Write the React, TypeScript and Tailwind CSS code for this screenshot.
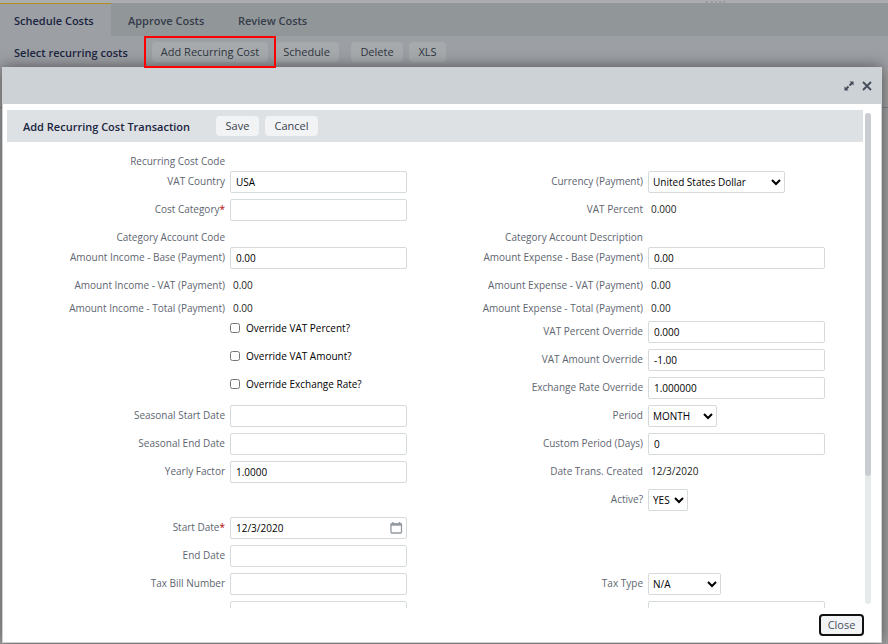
import { useId } from "react";

type FieldProps = {
    label: string;
    value?: string;
    kind?: "input" | "text" | "select" | "date";
    required?: boolean;
    width?: string;
};

type Row = {
    height: string;
    left?: FieldProps;
    right?: FieldProps;
    check?: string;
};

const FULL = "h-7 items-center [&>label]:pb-0.5 [&>span]:pb-0.5";

const rows: Row[] = [
    { height: "h-[26px] items-end", left: { label: "Recurring Cost Code", kind: "text" } },
    {
        height: FULL,
        left: { label: "VAT Country", value: "USA" },
        right: { label: "Currency (Payment)", value: "United States Dollar", kind: "select", width: "w-[137px]" },
    },
    {
        height: FULL,
        left: { label: "Cost Category", required: true },
        right: { label: "VAT Percent", value: "0.000", kind: "text" },
    },
    {
        height: "h-5 items-end",
        left: { label: "Category Account Code", kind: "text" },
        right: { label: "Category Account Description", kind: "text" },
    },
    {
        height: FULL,
        left: { label: "Amount Income - Base (Payment)", value: "0.00" },
        right: { label: "Amount Expense - Base (Payment)", value: "0.00" },
    },
    {
        height: FULL,
        left: { label: "Amount Income - VAT (Payment)", value: "0.00", kind: "text" },
        right: { label: "Amount Expense - VAT (Payment)", value: "0.00", kind: "text" },
    },
    {
        height: "h-[18px] items-center [&>span]:pb-0.5",
        left: { label: "Amount Income - Total (Payment)", value: "0.00", kind: "text" },
        right: { label: "Amount Expense - Total (Payment)", value: "0.00", kind: "text" },
    },
    { height: FULL, check: "Override VAT Percent?", right: { label: "VAT Percent Override", value: "0.000" } },
    { height: FULL, check: "Override VAT Amount?", right: { label: "VAT Amount Override", value: "-1.00" } },
    { height: FULL, check: "Override Exchange Rate?", right: { label: "Exchange Rate Override", value: "1.000000" } },
    {
        height: FULL,
        left: { label: "Seasonal Start Date" },
        right: { label: "Period", value: "MONTH", kind: "select", width: "w-[69px]" },
    },
    { height: FULL, left: { label: "Seasonal End Date" }, right: { label: "Custom Period (Days)", value: "0" } },
    {
        height: FULL,
        left: { label: "Yearly Factor", value: "1.0000" },
        right: { label: "Date Trans. Created", value: "12/3/2020", kind: "text" },
    },
    { height: FULL, right: { label: "Active?", value: "YES", kind: "select", width: "w-10" } },
    { height: FULL, left: { label: "Start Date", value: "12/3/2020", kind: "date", required: true } },
    { height: FULL, left: { label: "End Date" } },
    {
        height: FULL,
        left: { label: "Tax Bill Number" },
        right: { label: "Tax Type", value: "N/A", kind: "select", width: "w-[73px]" },
    },
    { height: FULL, left: { label: "" }, right: { label: "" } },
];

const inputClass = "block h-[22px] w-[177px] rounded-xs border border-[#d5dadc] bg-white px-[5px] text-black";

function CalendarIcon() {
    return (
        <svg width="14" height="14" viewBox="0 0 14 14" fill="none" stroke="#9299a0" aria-hidden="true">
            <rect x="2" y="3" width="10.500" height="9" rx="1" strokeWidth="1.300" />
            <path d="M1.500 3.500H13" strokeWidth="2.400" />
            <path d="M4 1v2M10.500 1v2" strokeWidth="1.500" />
        </svg>
    );
}

function Field({ label, value = "", kind = "input", required, width }: FieldProps) {
    const id = useId();
    const caption = (
        <>
            {label}
            {required && <span className="text-[#b00000]">*</span>}
        </>
    );

    if (kind === "text") {
        return (
            <>
                <span className="pr-[5px] text-right text-[#5e6570]">{caption}</span>
                <span className="pl-[3px] text-[#222]">{value}</span>
            </>
        );
    }

    return (
        <>
            <label htmlFor={id} className="pr-[5px] text-right text-[#5e6570]">{caption}</label>
            {kind === "select" ? (
                <select id={id} className={`h-[22px] rounded-xs border border-[#d5dadc] bg-white text-black ${width}`}>
                    <option>{value}</option>
                </select>
            ) : (
                <div className="relative w-[177px]">
                    <input id={id} type="text" defaultValue={value} className={inputClass} />
                    {kind === "date" && (
                        <button type="button" aria-label="Pick a date" className="absolute top-1 right-1">
                            <CalendarIcon />
                        </button>
                    )}
                </div>
            )}
        </>
    );
}

function CheckField({ label }: { label: string }) {
    return (
        <>
            <span />
            <label className="flex items-center gap-1.5 self-start pt-[3px] text-black">
                <input type="checkbox" className="size-2.5" />
                {label}
            </label>
        </>
    );
}

function Blank() {
    return (
        <>
            <span />
            <span />
        </>
    );
}

const backButton = "relative h-5 whitespace-nowrap rounded-sm bg-[#a6aaad] pt-px text-[11px] text-[#2f3540]";
const barButton = "h-5 rounded-sm bg-[#f1f3f5] text-[11px] text-[#3a414c]";

export default function App() {
    return (
        <div className="relative flex h-screen flex-col overflow-hidden bg-[#a2a2a2] font-['Open_Sans','Noto_Sans',sans-serif]">
            {/* Page under the dialog */}
            <div className="flex h-[3px] shrink-0 justify-end bg-[#acadaf]">
                <div className="mr-[163px] w-[19px] border-b-2 border-dotted border-[#999ca0]"></div>
            </div>
            <nav className="flex h-[33px] shrink-0 bg-[#919699] text-[11px] font-semibold text-[#353c49]">
                <a href="#schedule" className="flex w-[111px] items-center border-t border-[#b08d1c] bg-[#9c9fa4] pt-0.5 pl-3.5 text-[#1b2440]">Schedule Costs</a>
                <a href="#approve" className="flex w-[110px] items-center pt-[3px] pl-[17px]">Approve Costs</a>
                <a href="#review" className="flex items-center pt-[3px] pl-[17px]">Review Costs</a>
            </nav>
            <div className="flex h-8 shrink-0 items-center bg-[#9c9fa4] pl-3.5">
                <h1 className="w-[138px] pt-0.5 text-[11px] font-semibold text-[#1b2440]">Select recurring costs</h1>
                <button type="button" className={`${backButton} w-[116px]`}>
                    Add Recurring Cost
                    <span className="absolute -inset-x-2 -inset-y-1.5 z-20 border-2 border-[#ff0000]"></span>
                </button>
                <button type="button" className={`${backButton} ml-1.5 w-[65px]`}>Schedule</button>
                <button type="button" className={`${backButton} ml-3 w-[52px]`}>Delete</button>
                <button type="button" className={`${backButton} ml-1.5 w-[37px]`}>XLS</button>
            </div>
            <div className="h-10 shrink-0 border-b border-[#85888a]"></div>

            {/* Dialog */}
            <div
                role="dialog"
                aria-label="Add Recurring Cost Transaction"
                className="absolute top-[67px] right-1.5 bottom-px left-0.5 z-10 flex flex-col border border-[#cdd2d6] bg-white text-[10px] leading-[14px] shadow-[0_0_14px_rgba(0,0,0,0.5)]"
            >
                <div className="flex h-9 shrink-0 items-center justify-end gap-2 bg-[#cdd2d6] pr-[9px] text-[#454d5b]">
                    <button type="button" aria-label="Maximize">
                        <svg width="10" height="10" viewBox="0 0 11 11" fill="currentColor" aria-hidden="true">
                            <path d="M6 0.5h4.500V5L9 3.500 6.800 5.700 5.300 4.200 7.500 2zM5 10.500H.5V6L2 7.500 4.200 5.300 5.700 6.800 3.500 9z" />
                        </svg>
                    </button>
                    <button type="button" aria-label="Close dialog">
                        <svg width="10" height="10" viewBox="0 0 10 10" fill="none" stroke="currentColor" strokeWidth="1.800" aria-hidden="true">
                            <path d="M1 1l8 8M9 1L1 9" />
                        </svg>
                    </button>
                </div>

                <div className="flex min-h-0 flex-1 gap-0.5 pt-1.5 pr-2.5 pl-1">
                    <div className="flex min-w-0 flex-1 flex-col">
                        <div className="flex h-8 shrink-0 items-center bg-[#dde1e4] pl-4">
                            <h2 className="w-[193px] pt-0.5 text-[11px] font-semibold text-[#1b2440]">Add Recurring Cost Transaction</h2>
                            <button type="button" className={`${barButton} w-[43px]`}>Save</button>
                            <button type="button" className={`${barButton} ml-1.5 w-[53px]`}>Cancel</button>
                        </div>
                        <form className="min-h-0 flex-1 overflow-hidden">
                            {rows.map((row, i) => (
                                <div key={i} className={`grid grid-cols-[223fr_200fr_218fr_215fr] ${row.height}`}>
                                    {row.check ? <CheckField label={row.check} /> : row.left ? <Field {...row.left} /> : <Blank />}
                                    {row.right ? <Field {...row.right} /> : <Blank />}
                                </div>
                            ))}
                        </form>
                    </div>
                    {/* Scrollbar */}
                    <div className="mt-[3px] mb-1 w-1.5 rounded-full bg-[#e6eaeb]">
                        <div className="h-[74%] rounded-full bg-[#c9cdd2]"></div>
                    </div>
                </div>

                <div className="flex h-[34px] shrink-0 items-start justify-end pt-1.5 pr-[17px]">
                    <button type="button" className="h-[22px] w-[45px] rounded-sm border-2 border-[#111] bg-[#f1f3f5] text-[11px] text-[#4a515c]">Close</button>
                </div>
            </div>
        </div>
    );
}
